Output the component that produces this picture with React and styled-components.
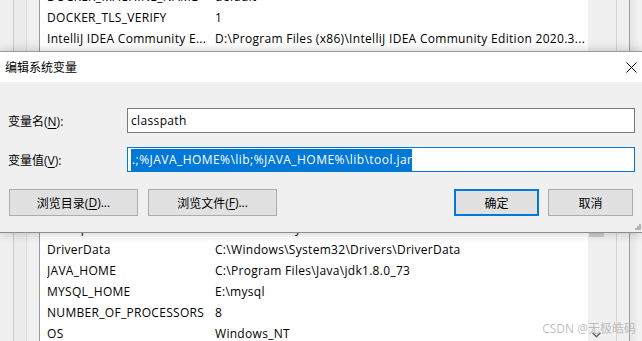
import React from 'react'
import styled, { createGlobalStyle } from 'styled-components'

const GlobalStyle = createGlobalStyle`
    html, body { margin: 0; padding: 0; }
    body {
        font-family: "Open Sans", "Noto Sans CJK SC", sans-serif;
        font-size: 12px;
        color: #000;
        background: #f0f0f0;
    }
`;

const userVars = [
    ['DOCKER_MACHINE_NAME', 'default'],
    ['DOCKER_TLS_VERIFY', '1'],
    ['IntelliJ IDEA Community E...', 'D:\\Program Files (x86)\\IntelliJ IDEA Community Edition 2020.3...'],
];

const systemVars = [
    ['ComSpec', 'C:\\Windows\\system32\\cmd.exe'],
    ['DriverData', 'C:\\Windows\\System32\\Drivers\\DriverData'],
    ['JAVA_HOME', 'C:\\Program Files\\Java\\jdk1.8.0_73'],
    ['MYSQL_HOME', 'E:\\mysql'],
    ['NUMBER_OF_PROCESSORS', '8'],
    ['OS', 'Windows_NT'],
];

function VarPane({ rows, height, bottom, thumb, arrow }) {
    return (
        <Pane style={{ height }}>
            <Strip $w={13} $line="#c9c9c9" />
            <Strip $w={12} $line="#dcdcdc" $bg="#ececec" />
            <Strip $w={12} $line="#9a9a9a" />
            <ListBox>
                <Rows $bottom={bottom}>
                    {rows.map(([name, value]) => (
                        <Row key={name}>
                            <Name>{name}</Name>
                            <Value>{value}</Value>
                        </Row>
                    ))}
                </Rows>
                <ScrollBar>
                    {thumb && <Thumb />}
                    {arrow && (
                        <Arrow width="9" height="6" viewBox="0 0 9 6">
                            <path d="M0.5 0.8 L4.5 4.8 L8.5 0.8" fill="none" stroke="#606060" strokeWidth="1.3" />
                        </Arrow>
                    )}
                </ScrollBar>
            </ListBox>
            <Strip $w={11} $line="#d4d4d4" />
            <Strip $w={12} $line="#a0a0a0" />
            <Strip $w={11} $bg="linear-gradient(90deg, #e6e6e6, #f4f4f4)" $noline />
        </Pane>
    )
}

function App() {
    return (
        <Page>
            <GlobalStyle />
            <VarPane rows={userVars} height={51} bottom />
            <Hidden />
            <VarPane rows={systemVars} height={123} thumb arrow />

            <Dialog>
                <TitleBar>
                    <span>编辑系统变量</span>
                    <svg width="11" height="11" viewBox="0 0 11 11">
                        <path d="M0.5 0.5 L10.5 10.5 M10.5 0.5 L0.5 10.5" stroke="#000" strokeWidth="1" />
                    </svg>
                </TitleBar>
                <Body>
                    <Fields>
                        <Label>变量名(<u>N</u>):</Label>
                        <Input>classpath</Input>
                        <Label>变量值(<u>V</u>):</Label>
                        <Input $focused>
                            <Selected>.;%JAVA_HOME%\lib;%JAVA_HOME%\lib\tool.jar</Selected>
                        </Input>
                    </Fields>
                    <ButtonBar>
                        <ButtonGroup>
                            <Button $w={129}>浏览目录(<u>D</u>)...</Button>
                            <Button $w={129}>浏览文件(<u>F</u>)...</Button>
                        </ButtonGroup>
                        <ButtonGroup>
                            <Button $w={85} $default>确定</Button>
                            <Button $w={85}>取消</Button>
                        </ButtonGroup>
                    </ButtonBar>
                    <Grip width="6" height="6" viewBox="0 0 6 6">
                        <rect x="4" y="0" width="2" height="2" fill="#b4b4b4" />
                        <rect x="2" y="2" width="2" height="2" fill="#b4b4b4" />
                        <rect x="4" y="2" width="2" height="2" fill="#b4b4b4" />
                        <rect x="0" y="4" width="2" height="2" fill="#b4b4b4" />
                        <rect x="2" y="4" width="2" height="2" fill="#b4b4b4" />
                        <rect x="4" y="4" width="2" height="2" fill="#b4b4b4" />
                    </Grip>
                </Body>
            </Dialog>

            <Watermark>CSDN @无极皓码</Watermark>
        </Page>
    )
}

const Page = styled.div`
    position: relative;
    width: 642px;
    height: 341px;
    overflow: hidden;
    display: flex;
    flex-direction: column;
    background: #f0f0f0;
`;

const Pane = styled.div`
    display: flex;
    flex-shrink: 0;
    overflow: hidden;
`;

const Hidden = styled.div`
    flex: 1;
`;

const Strip = styled.div`
    width: ${p => p.$w}px;
    flex-shrink: 0;
    background: ${p => p.$bg || '#f0f0f0'};
    border-right: ${p => p.$noline ? 'none' : `1px solid ${p.$line}`};
`;

const ListBox = styled.div`
    width: 565px;
    flex-shrink: 0;
    display: flex;
    background: #fff;
`;

const Rows = styled.div`
    flex: 1;
    min-width: 0;
    display: flex;
    flex-direction: column;
    justify-content: ${p => p.$bottom ? 'flex-end' : 'flex-start'};
    padding-bottom: ${p => p.$bottom ? '2px' : '0'};
`;

const Row = styled.div`
    height: 21px;
    flex-shrink: 0;
    display: flex;
    align-items: center;
    padding-left: 7px;
    white-space: nowrap;
    letter-spacing: 0.3px;
`;

const Name = styled.div`
    width: 168px;
    flex-shrink: 0;
    overflow: hidden;
`;

const Value = styled.div`
    flex: 1;
    overflow: hidden;
`;

const ScrollBar = styled.div`
    width: 17px;
    display: flex;
    flex-direction: column;
    align-items: center;
    background: #f0f0f0;
`;

const Thumb = styled.div`
    width: 15px;
    height: 19px;
    background: #cdcdcd;
`;

const Arrow = styled.svg`
    margin-top: auto;
    margin-bottom: 3px;
`;

const Dialog = styled.div`
    position: absolute;
    top: 51px;
    left: 0;
    right: 0;
    height: 182px;
    box-sizing: border-box;
    display: flex;
    flex-direction: column;
    border-top: 1px solid #9a9a9a;
    border-bottom: 1px solid #8c8c8c;
    background: #f0f0f0;
    box-shadow: 0 0 10px rgba(0, 0, 0, 0.22);
`;

const TitleBar = styled.div`
    height: 30px;
    flex-shrink: 0;
    display: flex;
    align-items: center;
    justify-content: space-between;
    padding: 0 5px 0 5px;
    background: #fff;
    svg { margin-top: 1px; }
`;

const Body = styled.div`
    position: relative;
    flex: 1;
    padding: 26px 7px 0 8px;
`;

const Fields = styled.div`
    display: grid;
    grid-template-columns: 119px 1fr;
    grid-auto-rows: 25px;
    row-gap: 14px;
    align-items: center;
`;

const Label = styled.div`
    u { text-decoration-thickness: 1px; text-underline-offset: 2px; }
`;

const Input = styled.div`
    height: 25px;
    box-sizing: border-box;
    display: flex;
    align-items: center;
    padding-left: 3px;
    background: #fff;
    border: 1px solid ${p => p.$focused ? '#0078d7' : '#7a7a7a'};
    white-space: nowrap;
    overflow: hidden;
    letter-spacing: 0.35px;
`;

const Selected = styled.span`
    display: inline-block;
    height: 22px;
    line-height: 22px;
    padding-left: 1px;
    background: #0078d7;
    color: #fff;
    letter-spacing: 0.45px;
`;

const ButtonBar = styled.div`
    display: flex;
    justify-content: space-between;
    margin-top: 17px;
    padding-left: 1px;
    padding-right: 2px;
`;

const ButtonGroup = styled.div`
    display: flex;
    gap: 10px;
    & + & { gap: 9px; }
`;

const Button = styled.div`
    width: ${p => p.$w}px;
    height: 27px;
    box-sizing: border-box;
    display: flex;
    align-items: center;
    justify-content: center;
    background: #e1e1e1;
    border: ${p => p.$default ? '2px solid #0078d7' : '1px solid #adadad'};
    u { text-decoration-thickness: 1px; text-underline-offset: 2px; }
`;

const Grip = styled.svg`
    position: absolute;
    right: 1px;
    bottom: 2px;
`;

const Watermark = styled.div`
    position: absolute;
    right: 6px;
    bottom: 4px;
    color: rgba(170, 170, 170, 0.75);
    font-size: 12px;
`;

export default App
